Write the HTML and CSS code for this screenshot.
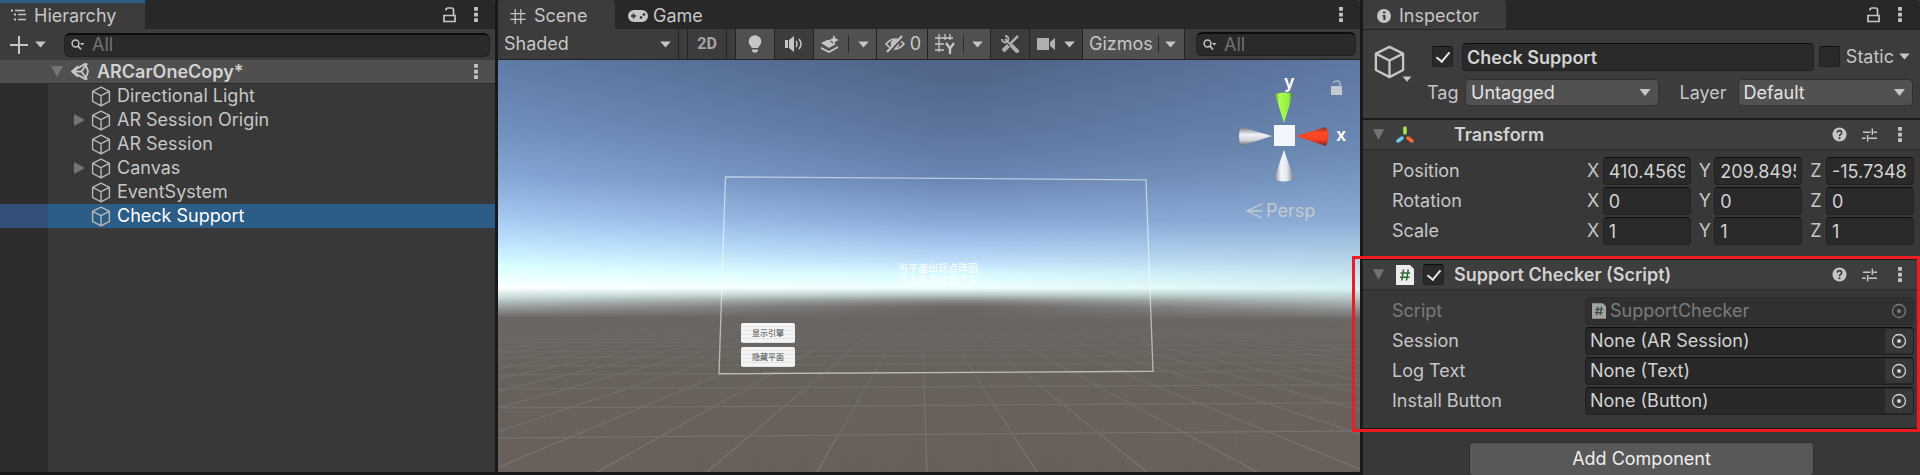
FILE: index.html
```html
<!DOCTYPE html>
<html lang="en">
<head>
<meta charset="utf-8">
<title>ARCarOneCopy - Editor</title>
<link rel="stylesheet" href="styles.css">
</head>
<body>
<svg class="defs" aria-hidden="true">
  <symbol id="cube" viewBox="0 0 20 22"><path d="M10 1.2 18.8 5.6V16.2L10 20.8 1.2 16.2V5.6ZM1.2 5.6 10 10 18.8 5.6M10 10V20.8" fill="none" stroke="currentColor" stroke-width="1.5" stroke-linejoin="round"/></symbol>
  <symbol id="down" viewBox="0 0 12 8"><path d="M0 .5H12L6 7.5Z" fill="currentColor"/></symbol>
  <symbol id="fold" viewBox="0 0 14 14"><path d="M0 1H13L6.500 13Z" fill="currentColor"/></symbol>
  <symbol id="foldright" viewBox="0 0 14 14"><path d="M1 0V13L13 6.500Z" fill="currentColor"/></symbol>
  <symbol id="dots" viewBox="0 0 4 16"><path d="M0 0H4V4H0ZM0 6H4V10H0ZM0 12H4V16H0Z" fill="currentColor"/></symbol>
  <symbol id="lock" viewBox="0 0 14 16"><path d="M3 3.500V3Q3 1 5 1H8.500Q10.500 1 10.500 3V8M1 8.500H12V14.500H1Z" fill="none" stroke="currentColor" stroke-width="1.700"/></symbol>
  <symbol id="search" viewBox="0 0 14 12"><circle cx="4.500" cy="4.500" r="3.400" fill="none" stroke="currentColor" stroke-width="1.500"/><path d="M7 7 10 10.500" stroke="currentColor" stroke-width="1.700"/><path d="M9 4H13.500L11.200 6.500Z" fill="currentColor"/></symbol>
  <symbol id="help" viewBox="0 0 16 16"><circle cx="8" cy="8" r="7.500" fill="currentColor"/><path d="M5.700 6.200Q5.700 3.900 8 3.900T10.300 6.100Q10.300 7.300 9 8 8 8.500 8 9.800" fill="none" stroke="#3c3c3c" stroke-width="1.700"/><path d="M7 11H9V13H7Z" fill="#3c3c3c"/></symbol>
  <symbol id="sliders" viewBox="0 0 16 14"><path d="M1 4H9M12 4H16M11 0V7M0 10.500H4M7 10.500H16M6 7V14" fill="none" stroke="currentColor" stroke-width="1.500"/></symbol>
  <symbol id="script" viewBox="0 0 18 20"><path d="M0 0H14L18 4V20H0Z" fill="#ececec"/><path d="M7.500 4.500 5.800 15.500M12.200 4.500 10.500 15.500M4.500 8H14M4 12.200H13.500" stroke="#2f6b36" stroke-width="1.600"/></symbol>
  <symbol id="target" viewBox="0 0 16 16"><circle cx="8" cy="8" r="6.500" fill="none" stroke="currentColor" stroke-width="1.300"/><circle cx="8" cy="8" r="2" fill="currentColor"/></symbol>
</svg>
<main class="editor">
  <section class="panel hierarchy">
    <header class="tabs">
      <button class="tab tab-focus"><svg class="i16" viewBox="0 0 16 14"><path d="M0 0H2V2H0ZM3 4H5V6H3ZM3 9H5V11H3Z" fill="currentColor"/><path d="M4 1H14M7 5H15M7 10H15" stroke="currentColor" stroke-width="1.500"/></svg>Hierarchy</button>
      <span class="fill"></span>
      <button class="ico" aria-label="Lock"><svg class="lock"><use href="#lock"/></svg></button>
      <button class="ico" aria-label="Menu"><svg class="dots"><use href="#dots"/></svg></button>
    </header>
    <div class="bar hbar">
      <button class="add" aria-label="Create"><svg class="plus" viewBox="0 0 18 18"><path d="M9 0V18M0 9H18" stroke="currentColor" stroke-width="2"/></svg><svg class="down"><use href="#down"/></svg></button>
      <label class="search"><svg><use href="#search"/></svg><input type="text" placeholder="All" aria-label="Search hierarchy"></label>
    </div>
    <div class="tree">
      <div class="scene-row"><svg class="fold"><use href="#fold"/></svg><svg class="unity" viewBox="0 0 20 20"><path d="M1 10 15 2 18 10 15 18ZM1 10H11L17 1.500M11 10 17 18.500M7.500 4.500 1 10 7.500 15.500" fill="none" stroke="currentColor" stroke-width="1.900" stroke-linejoin="round"/></svg><strong>ARCarOneCopy*</strong><span class="fill"></span><button class="ico" aria-label="Scene menu"><svg class="dots"><use href="#dots"/></svg></button></div>
      <ul class="nodes">
        <li><svg class="cube"><use href="#cube"/></svg>Directional Light</li>
        <li class="parent"><svg class="fold"><use href="#foldright"/></svg><svg class="cube"><use href="#cube"/></svg>AR Session Origin</li>
        <li><svg class="cube"><use href="#cube"/></svg>AR Session</li>
        <li class="parent"><svg class="fold"><use href="#foldright"/></svg><svg class="cube"><use href="#cube"/></svg>Canvas</li>
        <li><svg class="cube"><use href="#cube"/></svg>EventSystem</li>
        <li class="selected"><svg class="cube"><use href="#cube"/></svg>Check Support</li>
      </ul>
    </div>
  </section>

  <section class="panel scene">
    <header class="tabs">
      <button class="tab tab-scene"><svg class="i16" viewBox="0 0 16 16"><path d="M5 0V16M11 0V16M0 5H16M0 11H16" stroke="currentColor" stroke-width="1.300"/></svg>Scene</button>
      <button class="tab tab-off"><svg class="pad" viewBox="0 0 20 12"><rect width="20" height="12" rx="6" fill="currentColor"/><path d="M5.500 3.500V8.500M3 6H8" stroke="#282828" stroke-width="1.500"/><circle cx="13" cy="7.500" r="1.300" fill="#282828"/><circle cx="16" cy="4.500" r="1.300" fill="#282828"/></svg>Game</button>
      <span class="fill"></span>
      <button class="ico" aria-label="Menu"><svg class="dots"><use href="#dots"/></svg></button>
    </header>
    <div class="bar sbar">
      <button class="tool shaded">Shaded<svg class="down"><use href="#down"/></svg></button>
      <span class="space"></span>
      <button class="tool two-d">2D</button>
      <span class="space"></span>
      <button class="tool on single" aria-label="Lighting"><svg class="i18" viewBox="0 0 18 18"><circle cx="9" cy="6.500" r="6.300" fill="currentColor"/><path d="M5.500 10H12.500V13H5.500ZM6 14.500H12V16L10.500 17.500H7.500L6 16Z" fill="currentColor"/></svg></button>
      <button class="tool single" aria-label="Audio"><svg class="i18" viewBox="0 0 18 18"><path d="M0 5H3V13H0ZM4 5 9 1V17L4 13Z" fill="currentColor"/><path d="M11 6Q13 9 11 12M14 4Q18 9 14 14" fill="none" stroke="currentColor" stroke-width="1.500"/></svg></button>
      <button class="tool on split" aria-label="Effects"><svg class="i18" viewBox="0 0 18 18"><path d="M0 8 6 5H9Q10 9 15 9L8 13ZM0 12 8 16 17 11V13L8 18 0 14Z" fill="currentColor"/><path d="M13 0 14.500 3.500 18 5 14.500 6.500 13 10 11.500 6.500 8 5 11.500 3.500Z" fill="currentColor"/></svg><i></i><svg class="down"><use href="#down"/></svg></button>
      <button class="tool on eye" aria-label="Hidden objects"><svg class="i20" viewBox="0 0 20 18"><path d="M1 9Q10-1 19 9 10 19 1 9Z" fill="none" stroke="currentColor" stroke-width="1.700"/><circle cx="10" cy="9" r="4.300" fill="currentColor"/><path d="M3 17.500 18 1.500" stroke="#505050" stroke-width="4"/><path d="M2 17 17 1" stroke="currentColor" stroke-width="2"/></svg>0</button>
      <button class="tool on split" aria-label="Grid"><svg class="i20" viewBox="0 0 20 20"><path d="M4 0V18M10 0V6M15 0V6M0 4H18M0 10H9M0 16H9" stroke="currentColor" stroke-width="1.300"/><path d="M11 9 15 14.500 19 9M15 14V20" fill="none" stroke="currentColor" stroke-width="2.300"/></svg><i></i><svg class="down"><use href="#down"/></svg></button>
      <button class="tool single" aria-label="Tools"><svg class="i18" viewBox="0 0 18 18"><path d="M4 4 10 10" stroke="#adadad" stroke-width="2"/><path d="M11 11 16 16" stroke="#adadad" stroke-width="4" stroke-linecap="round"/><path d="M1 4A3.200 3.200 0 1 0 4 1" fill="none" stroke="#adadad" stroke-width="2"/><path d="M17 1 9.500 8.500" stroke="#adadad" stroke-width="2.500"/><path d="M7.500 10.500 2 16" stroke="#adadad" stroke-width="4"/></svg></button>
      <button class="tool cam" aria-label="Camera"><svg class="i18" viewBox="0 0 18 18"><path d="M0 3H12V15H0ZM13 7 18 3V15L13 11Z" fill="#b0b0b0"/></svg><svg class="down"><use href="#down"/></svg></button>
      <button class="tool on gizmos">Gizmos<i></i><svg class="down"><use href="#down"/></svg></button>
      <label class="search"><svg><use href="#search"/></svg><input type="text" placeholder="All" aria-label="Search scene"></label>
    </div>
    <div class="viewport">
      <svg class="world" viewBox="0 0 862 411" preserveAspectRatio="none" aria-hidden="true">
        <defs>
          <linearGradient id="mid" x2="0" y2="1"><stop offset="0" stop-color="#4f6386"/><stop offset=".17" stop-color="#5d749d"/><stop offset=".29" stop-color="#6b86b3"/><stop offset=".39" stop-color="#88a8d6"/><stop offset=".45" stop-color="#a6c8ef"/><stop offset=".49" stop-color="#c0e0fb"/><stop offset=".52" stop-color="#d8fbff"/><stop offset=".553" stop-color="#f0ffff"/><stop offset=".57" stop-color="#b9cbca"/><stop offset=".585" stop-color="#868886"/><stop offset=".6" stop-color="#6c6664"/><stop offset=".75" stop-color="#68625c"/><stop offset="1" stop-color="#69605b"/></linearGradient>
          <linearGradient id="west" x2="0" y2="1"><stop offset="0" stop-color="#5f7ba5"/><stop offset=".17" stop-color="#7190bd"/><stop offset=".29" stop-color="#87a9d7"/><stop offset=".39" stop-color="#a7cbf2"/><stop offset=".45" stop-color="#c0e6ff"/><stop offset=".5" stop-color="#d9ffff"/><stop offset=".553" stop-color="#fcffff"/><stop offset=".575" stop-color="#c9dcdb"/><stop offset=".6" stop-color="#989e9d"/><stop offset=".625" stop-color="#6c6664"/><stop offset=".75" stop-color="#68625c"/><stop offset="1" stop-color="#69605b"/></linearGradient>
          <linearGradient id="east" x2="0" y2="1"><stop offset="0" stop-color="#5f77a3"/><stop offset=".22" stop-color="#6c8ab3"/><stop offset=".39" stop-color="#8aabd4"/><stop offset=".46" stop-color="#a9c9e4"/><stop offset=".52" stop-color="#c8e4ee"/><stop offset=".555" stop-color="#d8f3f4"/><stop offset=".58" stop-color="#b5c4c4"/><stop offset=".605" stop-color="#8e9392"/><stop offset=".63" stop-color="#6c6664"/><stop offset=".75" stop-color="#68625c"/><stop offset="1" stop-color="#69605b"/></linearGradient>
          <linearGradient id="fadew"><stop offset="0" stop-color="#fff"/><stop offset=".52" stop-color="#000"/></linearGradient>
          <linearGradient id="fadee"><stop offset=".55" stop-color="#000"/><stop offset="1" stop-color="#fff"/></linearGradient>
          <linearGradient id="fadeg" x2="0" y2="1"><stop offset=".6" stop-color="#000"/><stop offset=".75" stop-color="#777"/><stop offset="1" stop-color="#fff"/></linearGradient>
          <mask id="mw"><rect width="862" height="411" fill="url(#fadew)"/></mask>
          <mask id="me"><rect width="862" height="411" fill="url(#fadee)"/></mask>
          <mask id="mg"><rect width="862" height="411" fill="url(#fadeg)"/></mask>
        </defs>
        <rect width="862" height="411" fill="url(#mid)"/>
        <rect width="862" height="411" fill="url(#west)" mask="url(#mw)"/>
        <rect width="862" height="411" fill="url(#east)" mask="url(#me)"/>
        <g mask="url(#mg)" fill="none" stroke="#7b7774" stroke-width="1.200">
          <path d="M423 230L-891 411M423 230L-781 411M423 230L-671 411M423 230L-561 411M423 230L-451 411M423 230L-341 411M423 230L-231 411M423 230L-121 411M423 230L-11 411M423 230L99 411M423 230L209 411M423 230L319 411M423 230L429 411M423 230L539 411M423 230L649 411M423 230L759 411M423 230L869 411M423 230L979 411M423 230L1089 411M423 230L1199 411M423 230L1309 411M423 230L1419 411M423 230L1529 411M423 230L1639 411M423 230L1749 411"/>
          <path d="M0 377 862 370M0 347 862 342M0 328 862 324M0 314 862 310M0 305 862 302M0 297 862 294M0 291 862 289M0 286 862 284M0 282 862 280M0 279 862 277M0 276 862 274M0 273 862 272M0 270 862 269"/>
        </g>
        <path d="M227.500 116.500 648 119.500 655 310.500 221 313Z" fill="none" stroke="#fff" stroke-opacity=".55" stroke-width="1.300"/>
      </svg>
      <p class="hint">当平面出现点阵图<br>点击屏幕放置汽车</p>
      <div class="ui-buttons"><button>显示引擎</button><button>隐藏平面</button></div>
      <svg class="axes" viewBox="0 -10 122 160" role="img" aria-label="Scene orientation">
        <defs>
          <linearGradient id="gg"><stop offset="0" stop-color="#6faa3a"/><stop offset=".25" stop-color="#a5ff4f"/><stop offset=".75" stop-color="#94f042"/><stop offset="1" stop-color="#4d7a28"/></linearGradient>
          <linearGradient id="gw"><stop offset="0" stop-color="#777c85"/><stop offset=".35" stop-color="#f4f6fb"/><stop offset=".65" stop-color="#e4e7ee"/><stop offset="1" stop-color="#70757d"/></linearGradient>
          <linearGradient id="gh" x2="0" y2="1"><stop offset="0" stop-color="#70757d"/><stop offset=".4" stop-color="#f0f2f7"/><stop offset=".7" stop-color="#d0d3d9"/><stop offset="1" stop-color="#5a5f66"/></linearGradient>
          <linearGradient id="gr" x2="0" y2="1"><stop offset="0" stop-color="#8a2a1c"/><stop offset=".3" stop-color="#ff4a2a"/><stop offset=".7" stop-color="#f04023"/><stop offset="1" stop-color="#6e2317"/></linearGradient>
        </defs>
        <path d="M37 20Q46 17 55 20L46 49Z" fill="url(#gg)"/>
        <path d="M46 76 36 105Q46 110 56 105Z" fill="url(#gw)"/>
        <path d="M34 62 3 53Q-1 62 3 72Z" fill="url(#gh)"/>
        <path d="M58 62 88 53Q93 62 88 72Z" fill="url(#gr)"/>
        <path d="M36 51H57V72H36Z" fill="#f3f5fa"/>
        <text class="axis" x="46" y="14">y</text><text class="axis" x="98" y="67">x</text>
        <path d="M93 12H104V21H93Z" fill="#c3c9d1"/><path d="M95 9Q96 7 99 7 102 7 102 10V13" fill="none" stroke="#a9b3c2" stroke-width="1.500"/>
        <path d="M24 130 9 137 24 144M9 137H24" fill="none" stroke="#c5cbd3" stroke-width="1.300"/>
        <text class="persp" x="28" y="143">Persp</text>
      </svg>
    </div>
  </section>

  <section class="panel inspector">
    <header class="tabs">
      <button class="tab tab-insp"><svg class="i14" viewBox="0 0 14 14"><circle cx="7" cy="7" r="7" fill="currentColor"/><path d="M6 2.500H8.500V4.500H6ZM5.500 6H8.500V11H6.300V7.500H5.500Z" fill="#3c3c3c"/></svg>Inspector</button>
      <span class="fill"></span>
      <button class="ico" aria-label="Lock"><svg class="lock"><use href="#lock"/></svg></button>
      <button class="ico" aria-label="Menu"><svg class="dots"><use href="#dots"/></svg></button>
    </header>
    <div class="object">
      <button class="object-icon" aria-label="Object icon"><svg class="bigcube"><use href="#cube"/></svg><svg class="down"><use href="#down"/></svg></button>
      <div class="object-rows">
        <div class="row name-row">
          <input class="check" type="checkbox" checked aria-label="Active">
          <input class="field name" type="text" value="Check Support" aria-label="Name">
          <input class="check" type="checkbox" id="static"><label for="static">Static</label>
          <button class="mini" aria-label="Static options"><svg class="down"><use href="#down"/></svg></button>
        </div>
        <div class="row">
          <label class="tag" for="tag">Tag</label><span class="select sel-tag"><select id="tag"><option>Untagged</option></select></span>
          <label class="layer" for="layer">Layer</label><span class="select sel-layer"><select id="layer"><option>Default</option></select></span>
        </div>
      </div>
    </div>
    <section class="component">
      <header><svg class="fold"><use href="#fold"/></svg><svg class="cicon" viewBox="0 0 18 18"><path d="M9 2V7" stroke="#a1e94c" stroke-width="3.500" stroke-linecap="round"/><path d="M6 12 2 15" stroke="#6fc7f2" stroke-width="3.500" stroke-linecap="round"/><path d="M12 12 16 15" stroke="#f4693a" stroke-width="3.500" stroke-linecap="round"/></svg><span class="slot"></span><h2>Transform</h2>
        <button class="ico" aria-label="Help"><svg class="help"><use href="#help"/></svg></button><button class="ico" aria-label="Presets"><svg class="sliders"><use href="#sliders"/></svg></button><button class="ico" aria-label="Menu"><svg class="dots"><use href="#dots"/></svg></button></header>
      <div class="props">
        <div class="prop"><span>Position</span><div class="xyz"><label>X<input class="field" type="text" value="410.45695"></label><label>Y<input class="field" type="text" value="209.84955"></label><label>Z<input class="field" type="text" value="-15.7348"></label></div></div>
        <div class="prop"><span>Rotation</span><div class="xyz"><label>X<input class="field" type="text" value="0"></label><label>Y<input class="field" type="text" value="0"></label><label>Z<input class="field" type="text" value="0"></label></div></div>
        <div class="prop"><span>Scale</span><div class="xyz"><label>X<input class="field" type="text" value="1"></label><label>Y<input class="field" type="text" value="1"></label><label>Z<input class="field" type="text" value="1"></label></div></div>
      </div>
    </section>
    <section class="component marked">
      <header><svg class="fold"><use href="#fold"/></svg><svg class="cicon"><use href="#script"/></svg><input class="check" type="checkbox" checked aria-label="Enabled"><h2>Support Checker (Script)</h2>
        <button class="ico" aria-label="Help"><svg class="help"><use href="#help"/></svg></button><button class="ico" aria-label="Presets"><svg class="sliders"><use href="#sliders"/></svg></button><button class="ico" aria-label="Menu"><svg class="dots"><use href="#dots"/></svg></button></header>
      <div class="props">
        <div class="prop disabled"><span>Script</span><div class="ref"><svg class="file"><use href="#script"/></svg><span class="value">SupportChecker</span><button disabled aria-label="Pick script"><svg><use href="#target"/></svg></button></div></div>
        <div class="prop"><span>Session</span><div class="ref"><span class="value">None (AR Session)</span><button aria-label="Pick session"><svg><use href="#target"/></svg></button></div></div>
        <div class="prop"><span>Log Text</span><div class="ref"><span class="value">None (Text)</span><button aria-label="Pick text"><svg><use href="#target"/></svg></button></div></div>
        <div class="prop"><span>Install Button</span><div class="ref"><span class="value">None (Button)</span><button aria-label="Pick button"><svg><use href="#target"/></svg></button></div></div>
      </div>
    </section>
    <footer><button class="add-component">Add Component</button></footer>
  </section>
</main>
</body>
</html>
```
FILE: styles.css
```css
* { box-sizing: border-box; }
body {
  margin: 0;
  background: #191919;
  color: #c6c6c6;
  font: 18px/24px Inter, "Noto Sans CJK SC", sans-serif;
}
button, input, select { font: inherit; color: inherit; margin: 0; }
button { background: none; border: 0; padding: 0; display: flex; align-items: center; }
svg { display: block; flex: none; }
.defs { position: absolute; width: 0; height: 0; }
.fill { flex: 1; }
.editor {
  display: grid;
  grid-template-columns: minmax(0, 495fr) minmax(0, 862fr) minmax(0, 557fr);
  gap: 3px;
  height: 100vh;
  overflow: hidden;
}
.panel { display: flex; flex-direction: column; background: #383838; min-height: 0; }
.hierarchy, .scene { margin-bottom: 3px; }

.tabs { display: flex; flex: none; height: 29px; background: #282828; border-radius: 4px 4px 0 0; gap: 17px; padding-right: 17px; }
.tab { height: 29px; background: #3c3c3c; gap: 8px; padding: 3px 25px 0 12px; border-radius: 4px 4px 0 0; }
.tab-focus { border-top: 3px solid #2c5d87; padding: 0 0 0 11px; gap: 7px; border-radius: 0; width: 145px; }
.tab-scene { width: 117px; }
.tab-off { background: none; padding-left: 0; gap: 5px; margin-left: -4px; }
.tab-insp { width: 143px; padding-left: 14px; }
.ico { justify-content: center; }
.i14 { width: 14px; height: 14px; }
.i16 { width: 16px; height: 15px; }
.i18 { width: 18px; height: 18px; }
.i20 { width: 20px; height: 20px; }
.pad { width: 20px; height: 12px; }
.lock { width: 14px; height: 16px; }
.dots { width: 4px; height: 15px; }
.down { width: 11px; height: 7px; }
.fold { width: 13px; height: 13px; color: #737373; }

.bar { display: flex; flex: none; height: 31px; background: #3c3c3c; }
.hbar { align-items: center; padding: 0 5px 0 10px; gap: 18px; }
.add { gap: 7px; }
.plus { width: 18px; height: 18px; }
.search { display: flex; flex: 1; align-items: center; gap: 7px; min-width: 0; height: 24px; padding: 0 6px; background: #2a2a2a; border: 1px solid #212121; border-top: 2px solid #0d0d0d; border-radius: 6px; }
.search svg { width: 14px; height: 12px; }
.search input { flex: 1; min-width: 0; width: 0; padding: 0; height: 20px; background: none; border: 0; outline: 0; }
.search input::placeholder { color: #727272; opacity: 1; }

.tree { flex: 1; background: linear-gradient(90deg, #2d2d2d 48px, #383838 48px); }
.scene-row { display: flex; align-items: center; height: 24px; padding: 0 17px 0 51px; background: #4f4f4f; border-bottom: 1px solid #2a2a2a; }
.unity { width: 19px; height: 19px; margin: 0 7px; }
.scene-row strong, h2, .name { font-weight: 600; color: #d2d2d2; }
.nodes { list-style: none; margin: 0; padding: 0; }
.nodes li { display: flex; align-items: center; height: 24px; padding-left: 91px; }
.nodes .parent { padding-left: 73px; gap: 5px; }
.nodes .cube { width: 20px; height: 21px; color: #b6b6b6; }
.nodes li > .cube { margin-right: 6px; }
.nodes .parent > .cube { margin-right: 1px; }
.nodes .selected { background: linear-gradient(90deg, #36507c 48px, #2c5d87 48px); color: #fff; }

.sbar { border-bottom: 1px solid #232323; padding-right: 4px; align-items: stretch; }
.tool { justify-content: space-between; flex: none; border-right: 1px solid #232323; }
.tool i { width: 1px; height: 18px; background: #2a2a2a; }
.on { background: #505050; }
.space { width: 9px; border-right: 1px solid #232323; flex: none; }
.shaded { width: 181px; padding: 0 7px 0 6px; }
.two-d { width: 39px; justify-content: center; font: 700 16px/20px Roboto, sans-serif; color: #a5a5a5; }
.single { width: 39px; justify-content: center; }
.split { width: 63px; padding: 0 7px; }
.eye { width: 51px; padding: 0 6px 0 8px; }
.cam { width: 53px; padding: 0 7px; }
.gizmos { width: 102px; padding: 0 8px 0 6px; }
.sbar .search { align-self: center; margin-left: 11px; }

.viewport { position: relative; flex: 1; min-height: 0; overflow: hidden; }
.world { position: absolute; inset: 0; width: 100%; height: 100%; }
.hint { position: absolute; left: 0; right: 0; top: 49%; padding-left: 18px; margin: 0; text-align: center; font: 10px/12px "Noto Sans CJK SC", sans-serif; color: #fff; }
.ui-buttons { position: absolute; left: 243px; bottom: 105px; display: grid; gap: 4px; }
.ui-buttons button { justify-content: center; width: 54px; height: 20px; border-radius: 2px; background: repeating-linear-gradient(#f4f4f4 0 3px, #e4e4e4 3px 4px); color: #444; font: 8px/12px "Noto Sans CJK SC", sans-serif; }
.axes { position: absolute; right: 0; top: 4px; width: 122px; height: 160px; }
.axis { font: 600 18px Inter, sans-serif; fill: #fff; }
.persp { font: 18px Inter, sans-serif; fill: #c5c8cc; }

.inspector { position: relative; z-index: 1; }
.inspector .tabs { padding-right: 18px; }
.object { display: flex; flex: none; padding: 13px 7px 12px 11px; background: #3c3c3c; border-top: 1px solid #232323; }
.object-icon { width: 53px; align-items: flex-start; }
.bigcube { width: 31px; height: 34px; margin-top: 2px; }
.object-icon .down { margin: 33px 0 0 -3px; width: 10px; height: 6px; }
.object-rows { flex: 1; display: grid; gap: 9px; min-width: 0; }
.row { display: flex; align-items: center; height: 27px; }
.name-row { padding-left: 5px; }
.check { appearance: none; flex: none; width: 21px; height: 21px; margin: 0; background: #2a2a2a; border: 1px solid #212121; border-top-color: #0d0d0d; border-radius: 3px; display: grid; place-items: center; }
.check:checked::before { content: ""; width: 6px; height: 11px; border: solid #e6e6e6; border-width: 0 2px 2px 0; transform: rotate(40deg); margin-bottom: 3px; }
.field { min-width: 0; height: 28px; padding: 0 5px; background: #2a2a2a; border: 1px solid #212121; border-top-color: #0d0d0d; border-radius: 4px; outline: 0; color: #d2d2d2; }
.name { flex: 1; margin: 0 5px 0 9px; padding: 1px 4px 0; }
.name-row label { margin-left: 6px; }
.mini { margin: 0 3px 0 5px; }
.tag { width: 38px; }
.layer { width: 58px; margin-left: 21px; }
.select { position: relative; min-width: 0; }
.select::after { content: ""; position: absolute; right: 8px; top: 10px; width: 11px; height: 7px; background: #c6c6c6; clip-path: polygon(0 0, 100% 0, 50% 100%); pointer-events: none; }
.sel-tag { flex: 193 1 0; }
.sel-layer { flex: 175 1 0; }
select { appearance: none; width: 100%; height: 27px; display: block; padding: 0 20px 0 5px; background: #515151; border: 1px solid #303030; border-radius: 4px; color: #e4e4e4; }

.component { border-top: 2px solid #1a1a1a; flex: none; }
.component header { display: flex; align-items: center; height: 31px; padding: 0 18px 0 10px; background: #3e3e3e; border-bottom: 2px solid #303030; gap: 15px; }
.component header .fold { width: 12px; margin-right: -4px; }
.cicon { width: 18px; height: 20px; }
.component header .check, .slot { width: 21px; margin: 0 -5px 0 -6px; }
h2 { flex: 1; margin: 0; font-size: 18px; line-height: 24px; }
.help { width: 15px; height: 15px; }
.sliders { width: 15px; height: 14px; }
.component header .dots { margin-left: 6px; }
.props { display: grid; gap: 2px; padding: 6px 6px 13px 0; }
.prop { display: grid; grid-template-columns: minmax(0, 222fr) minmax(0, 329fr); align-items: center; height: 28px; }
.prop > span { padding-left: 29px; }
.xyz { display: grid; grid-template-columns: repeat(3, minmax(0, 1fr)); gap: 8px; padding-left: 2px; }
.xyz label { display: flex; align-items: center; justify-content: space-between; }
.xyz .field { width: 88px; flex: none; }
.ref { display: flex; align-items: center; height: 28px; padding-left: 4px; background: #282828; border: 1px solid #202020; border-top-color: #0d0d0d; border-radius: 4px; color: #d2d2d2; }
.ref .value { flex: 1; }
.ref button { width: 28px; height: 24px; justify-content: center; background: #373737; border-radius: 0 3px 3px 0; }
.ref button svg { width: 16px; height: 16px; }
.disabled, .disabled .ref { color: #7b7b7b; }
.disabled .ref { background: #303030; border-color: #2a2a2a; gap: 4px; padding-left: 6px; }
.disabled .ref button { background: none; }
.file { width: 14px; height: 16px; opacity: .6; }
.marked { position: relative; }
.marked::after { content: ""; position: absolute; inset: -4px 0 -4px -11px; border: 3px solid #ed1c24; pointer-events: none; }
footer { border-top: 2px solid #1a1a1a; padding: 12px 19%; flex: none; }
.add-component { width: 100%; height: 34px; justify-content: center; background: #585858; border: 1px solid #303030; border-radius: 4px; color: #eee; }
```
